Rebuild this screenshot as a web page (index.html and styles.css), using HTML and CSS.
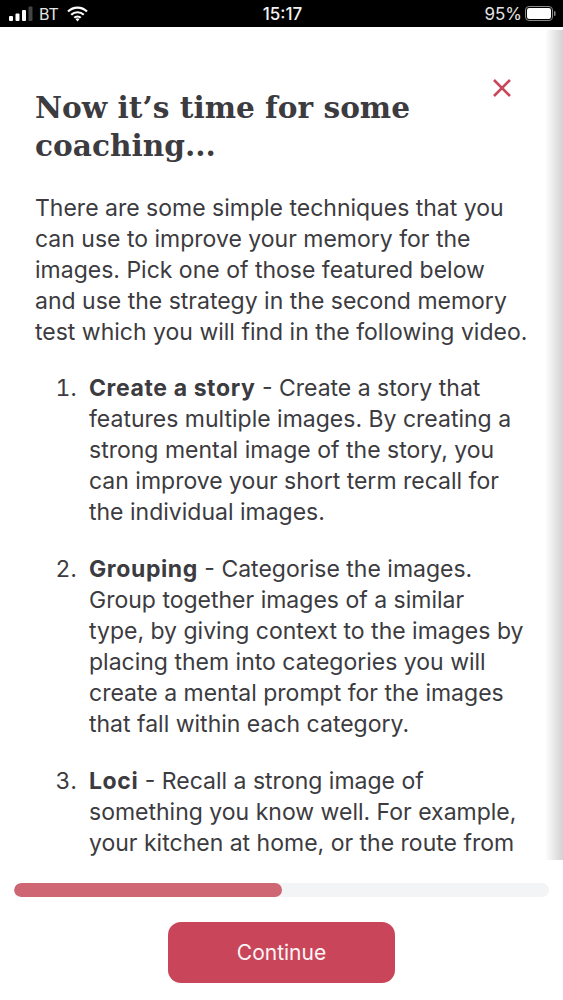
FILE: index.html
```html
<!DOCTYPE html>
<html lang="en">
<head>
<meta charset="utf-8">
<title>Coaching</title>
<link rel="stylesheet" href="styles.css">
</head>
<body>
<div class="phone">
  <header class="status">
    <div class="status-left">
      <svg class="signal" width="25" height="16" viewBox="0 0 25 16"><rect x="0" y="10" width="4" height="5" rx="1" fill="#fff"/><rect x="6.500" y="7.500" width="4" height="7.500" rx="1" fill="#fff"/><rect x="13" y="4" width="4" height="11" rx="1" fill="#fff"/><rect x="19.500" y="0.500" width="4" height="14.500" rx="1" fill="#444"/></svg>
      <span class="carrier">BT</span>
      <svg class="wifi" width="21" height="16" viewBox="0 0 21 16"><path d="M1 5.500a13.500 13.500 0 0 1 19 0M4.200 8.800a9 9 0 0 1 12.600 0M7.300 11.800a4.600 4.600 0 0 1 6.400 0" fill="none" stroke="#fff" stroke-width="2.200"/><path d="M8.600 13.300a2.700 2.700 0 0 1 3.800 0l-1.900 2.200z" fill="#fff"/></svg>
    </div>
    <div class="clock">15:17</div>
    <div class="status-right">
      <span class="percent">95%</span>
      <svg class="battery" width="31" height="15" viewBox="0 0 31 15"><rect x="0.500" y="0.500" width="27" height="14" rx="3.500" fill="none" stroke="#8a8a8a"/><rect x="2" y="2" width="24" height="11" rx="2.200" fill="#fff"/><rect x="29" y="5" width="1.500" height="5" rx="0.700" fill="#8a8a8a"/></svg>
    </div>
  </header>
  <main class="content">
    <button class="close" aria-label="Close">
      <svg width="20" height="20" viewBox="0 0 20 20"><path d="M2 2l16 16M18 2L2 18" stroke="#c9475b" stroke-width="2.600" fill="none"/></svg>
    </button>
    <h1 class="title">Now it’s time for some coaching...</h1>
    <p class="intro">There are some simple techniques that you can use to improve your memory for the images. Pick one of those featured below<br>and use the strategy in the second memory<br>test which you will find in the following video.</p>
    <ol class="tips">
      <li><strong>Create a story</strong> - Create a story that features multiple images. By creating a strong mental image of the story, you can improve your short term recall for the individual images.</li>
      <li><strong>Grouping</strong> - Categorise the images. Group together images of a similar<br>type, by giving context to the images by placing them into categories you will create a mental prompt for the images that fall within each category.</li>
      <li><strong>Loci</strong> - Recall a strong image of something you know well. For example, your kitchen at home, or the route from your house to the shops.</li>
    </ol>
    <div class="edge"></div>
  </main>
  <footer class="footer">
    <div class="track"><div class="fill"></div></div>
    <button class="continue">Continue</button>
  </footer>
</div>
</body>
</html>
```

FILE: styles.css
```css
* { box-sizing: border-box; }
html, body { margin: 0; padding: 0; background: #fff; }
body { font-family: "Inter", "Liberation Sans", sans-serif; color: #3c3b40; }
.phone { width: 563px; height: 1000px; display: flex; flex-direction: column; overflow: hidden; }
.status { height: 27px; flex: none; background: #000; color: #f2f2f2; display: grid; grid-template-columns: 1fr auto 1fr; align-items: center; padding: 0 7px 0 9px; font-size: 17px; }
.status-left { display: flex; align-items: center; gap: 5px; }
.carrier { font-size: 16px; color: #e4e4e4; }
.wifi { margin-left: 3px; }
.status-right { display: flex; align-items: center; justify-content: flex-end; gap: 3px; }
.percent { color: #e4e4e4; }
.clock { font-weight: 500; }
.content { position: relative; flex: none; height: 833px; overflow: hidden; padding: 62px 18px 0 35px; }
.edge { position: absolute; top: 3px; right: 0; bottom: 0; width: 18px; background: linear-gradient(to right, rgba(205,205,205,0), #d2d2d2); }
.close { position: absolute; top: 51px; right: 51px; width: 20px; height: 20px; padding: 0; border: 0; background: none; }
.close svg { display: block; }
.title { margin: 0 0 28px; font-family: "DejaVu Serif", "Liberation Serif", serif; font-weight: 700; font-size: 29.6px; line-height: 38px; color: #3c3b40; width: 430px; }
.intro { margin: 0 0 25px; width: 500px; font-size: 23px; line-height: 31px; letter-spacing: 0; }
.tips { margin: 0; padding: 0 0 0 54px; width: 500px; font-size: 23px; line-height: 31px; letter-spacing: 0; }
.tips li { margin-bottom: 26px; }
.tips li::marker { content: counter(list-item) ".  "; }
.tips strong { letter-spacing: 0.6px; }
.footer { flex: 1; display: flex; flex-direction: column; align-items: center; padding: 23px 14px 0 14px; }
.track { width: 100%; height: 14px; border-radius: 7px; background: #f3f4f6; overflow: hidden; }
.fill { width: 50%; height: 100%; border-radius: 7px; background: #cf6674; }
.continue { margin-top: 25px; width: 227px; height: 61px; border: 0; border-radius: 13px; background: #c9465a; color: #fdf5f6; font-family: inherit; font-size: 21px; }
```
